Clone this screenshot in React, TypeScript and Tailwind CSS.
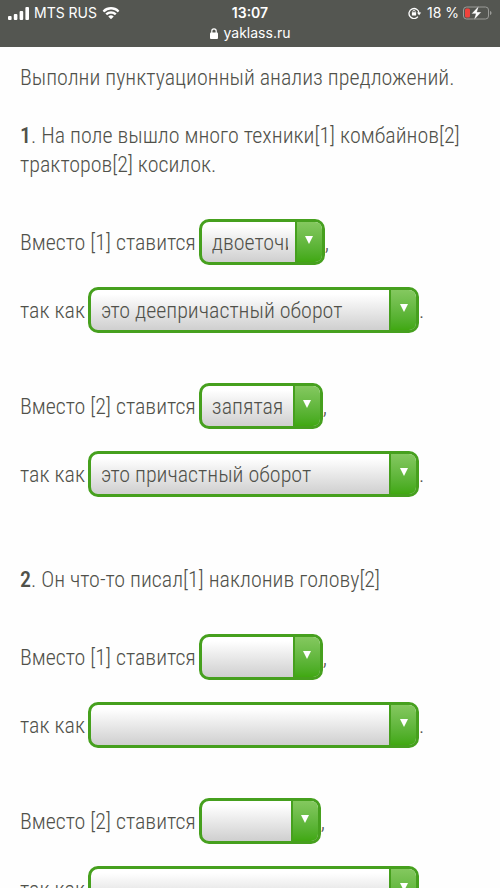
import { useState } from 'react'

interface Blank {
  mark: string
  sign: string
  reason: string
  signWidth: string
}

interface Task {
  id: number
  text: string
  blanks: Blank[]
}

const TASKS: Task[] = [
  {
    id: 1,
    text: 'На поле вышло много техники[1] комбайнов[2] тракторов[2] косилок.',
    blanks: [
      { mark: '[1]', sign: 'двоеточие', reason: 'это деепричастный оборот', signWidth: 'w-[126px]' },
      { mark: '[2]', sign: 'запятая', reason: 'это причастный оборот', signWidth: 'w-[124px]' },
    ],
  },
  {
    id: 2,
    text: 'Он что-то писал[1] наклонив голову[2]',
    blanks: [
      { mark: '[1]', sign: '', reason: '', signWidth: 'w-[124px]' },
      { mark: '[2]', sign: '', reason: '', signWidth: 'w-[122px]' },
    ],
  },
]

const SIGNS = ['', 'двоеточие', 'запятая']
const REASONS = ['', 'это деепричастный оборот', 'это причастный оборот']

interface DropdownProps {
  id: string
  initial: string
  options: string[]
  width: string
}

function Dropdown({ id, initial, options, width }: DropdownProps) {
  const [value, setValue] = useState(initial)

  return (
    <span
      className={`relative flex h-[46px] shrink-0 overflow-hidden rounded-[10px] border-[3px] border-[#46a01e] bg-linear-to-b from-white from-10% to-[#cfcfcf] ${width}`}
    >
      <select
        id={id}
        value={value}
        onChange={(e) => setValue(e.target.value)}
        className="w-full appearance-none bg-transparent pr-[34px] pl-[10px] outline-none"
      >
        {options.map((o) => (
          <option key={o} value={o}>
            {o}
          </option>
        ))}
      </select>
      <span className="pointer-events-none absolute inset-y-0 right-0 flex w-[27px] items-center justify-center border-l-2 border-[#46a01e] bg-linear-to-b from-[#84c85f] to-[#40a810] pb-[5px]">
        <svg viewBox="0 0 8 8" className="size-2 fill-white">
          <path d="M0 0h8L4 8z" />
        </svg>
      </span>
    </span>
  )
}

function StatusBar() {
  return (
    <header className="h-[47px] shrink-0 bg-[#545651] px-2 pt-[3px] font-['Inter',sans-serif] text-sm leading-5 text-white">
      <div className="grid grid-cols-[1fr_auto_1fr] items-center">
        <div className="flex items-center gap-[5px]">
          <svg viewBox="0 0 21 13" className="h-[13px] w-[21px] fill-white">
            <rect x="0" y="9" width="3.6" height="4" rx="1" />
            <rect x="5.8" y="7" width="3.6" height="6" rx="1" />
            <rect x="11.6" y="4" width="3.6" height="9" rx="1" />
            <rect x="17.4" y="0" width="3.6" height="13" rx="1" />
          </svg>
          <span>MTS RUS</span>
          <svg viewBox="0 0 18 13" className="h-[13px] w-[18px] fill-white">
            <path d="M9 2.6c2.5 0 4.8 1 6.5 2.6.1.1.3.1.4 0l1.3-1.3c.1-.1.1-.3 0-.5a11.9 11.9 0 0 0-16.4 0c-.1.2-.1.4 0 .5l1.3 1.3c.1.1.3.1.4 0A9.4 9.4 0 0 1 9 2.6z" />
            <path d="M9 6.7c1.4 0 2.7.5 3.7 1.4.1.1.3.1.4 0l1.3-1.3c.1-.1.1-.3 0-.5a7.900 7.900 0 0 0-10.800 0c-.1.2-.1.4 0 .5l1.3 1.3c.1.1.3.1.4 0 1-.9 2.3-1.4 3.7-1.4z" />
            <path d="M11.5 9.7c.1-.1.1-.3 0-.4a3.9 3.9 0 0 0-5 0c-.1.1-.1.3 0 .4l2.3 2.3c.1.1.3.1.4 0z" />
          </svg>
        </div>
        <span className="font-semibold">13:07</span>
        <div className="flex items-center justify-end">
          <svg viewBox="0 0 14 12" className="mr-[5px] h-3 w-[14px]" fill="none" stroke="white">
            <path d="M9.9 9.7A5 5 0 1 1 11 6" strokeWidth="1.3" />
            <path d="M9 5.500h4.200L11.100 8.200z" fill="white" stroke="none" />
            <rect x="3.9" y="5.300" width="4.200" height="3.200" rx=".5" fill="white" stroke="none" />
            <path d="M4.800 5.500V4.500a1.200 1.200 0 0 1 2.400 0v1" strokeWidth=".8" />
          </svg>
          <span>18 %</span>
          <svg viewBox="0 0 29 14" className="ml-1 h-[14px] w-[29px]">
            <rect x=".5" y="1" width="25" height="12" rx="3" fill="none" stroke="#9a9b98" />
            <rect x="2" y="2.500" width="5" height="9" rx="1.500" fill="#f0423c" />
            <path d="M27 5v4c1-.3 1.500-1.100 1.500-2S28 5.300 27 5z" fill="#9a9b98" />
            <path d="M15.800 0 8.500 7.800h4.300L11 14l7.300-7.900H14z" fill="white" stroke="#545651" strokeWidth=".3" />
          </svg>
        </div>
      </div>
      <div className="flex items-center justify-center gap-[6px]">
        <svg viewBox="0 0 8 11" className="h-[11px] w-2">
          <rect y="4.500" width="8" height="6.500" rx="1" fill="white" />
          <path d="M1.800 5V3a2.200 2.200 0 0 1 4.400 0v2" fill="none" stroke="white" strokeWidth="1.200" />
        </svg>
        <span>yaklass.ru</span>
      </div>
    </header>
  )
}

export default function App() {
  return (
    <div className="flex h-screen flex-col overflow-hidden bg-[#fefefe]">
      <StatusBar />
      <main className="min-h-0 flex-1 overflow-hidden px-5 pt-4 font-['Roboto_Condensed','Liberation_Sans_Narrow','Roboto',sans-serif] text-[22px] leading-[29px] font-light text-[#50514a]">
        <p className="mb-[29px]">Выполни пунктуационный анализ предложений.</p>

        {TASKS.map((task) => (
          <section key={task.id} className="mb-[68px]">
            <p className="mb-10">
              <b className="font-medium">{task.id}</b>. {task.text}
            </p>
            <div className="flex flex-col gap-[50px]">
              {task.blanks.map((b, i) => (
                <div key={b.mark} className="flex flex-col gap-[22px]">
                  <div className="flex items-center">
                    <label htmlFor={`sign-${task.id}-${i}`} className="mr-[3px]">
                      Вместо {b.mark} ставится
                    </label>
                    <Dropdown
                      id={`sign-${task.id}-${i}`}
                      initial={b.sign}
                      options={SIGNS}
                      width={b.signWidth}
                    />
                    ,
                  </div>
                  <div className="flex items-center">
                    <label htmlFor={`reason-${task.id}-${i}`} className="mr-[3px]">
                      так как
                    </label>
                    <Dropdown
                      id={`reason-${task.id}-${i}`}
                      initial={b.reason}
                      options={REASONS}
                      width="w-[331px]"
                    />
                    .
                  </div>
                </div>
              ))}
            </div>
          </section>
        ))}
      </main>
    </div>
  )
}
